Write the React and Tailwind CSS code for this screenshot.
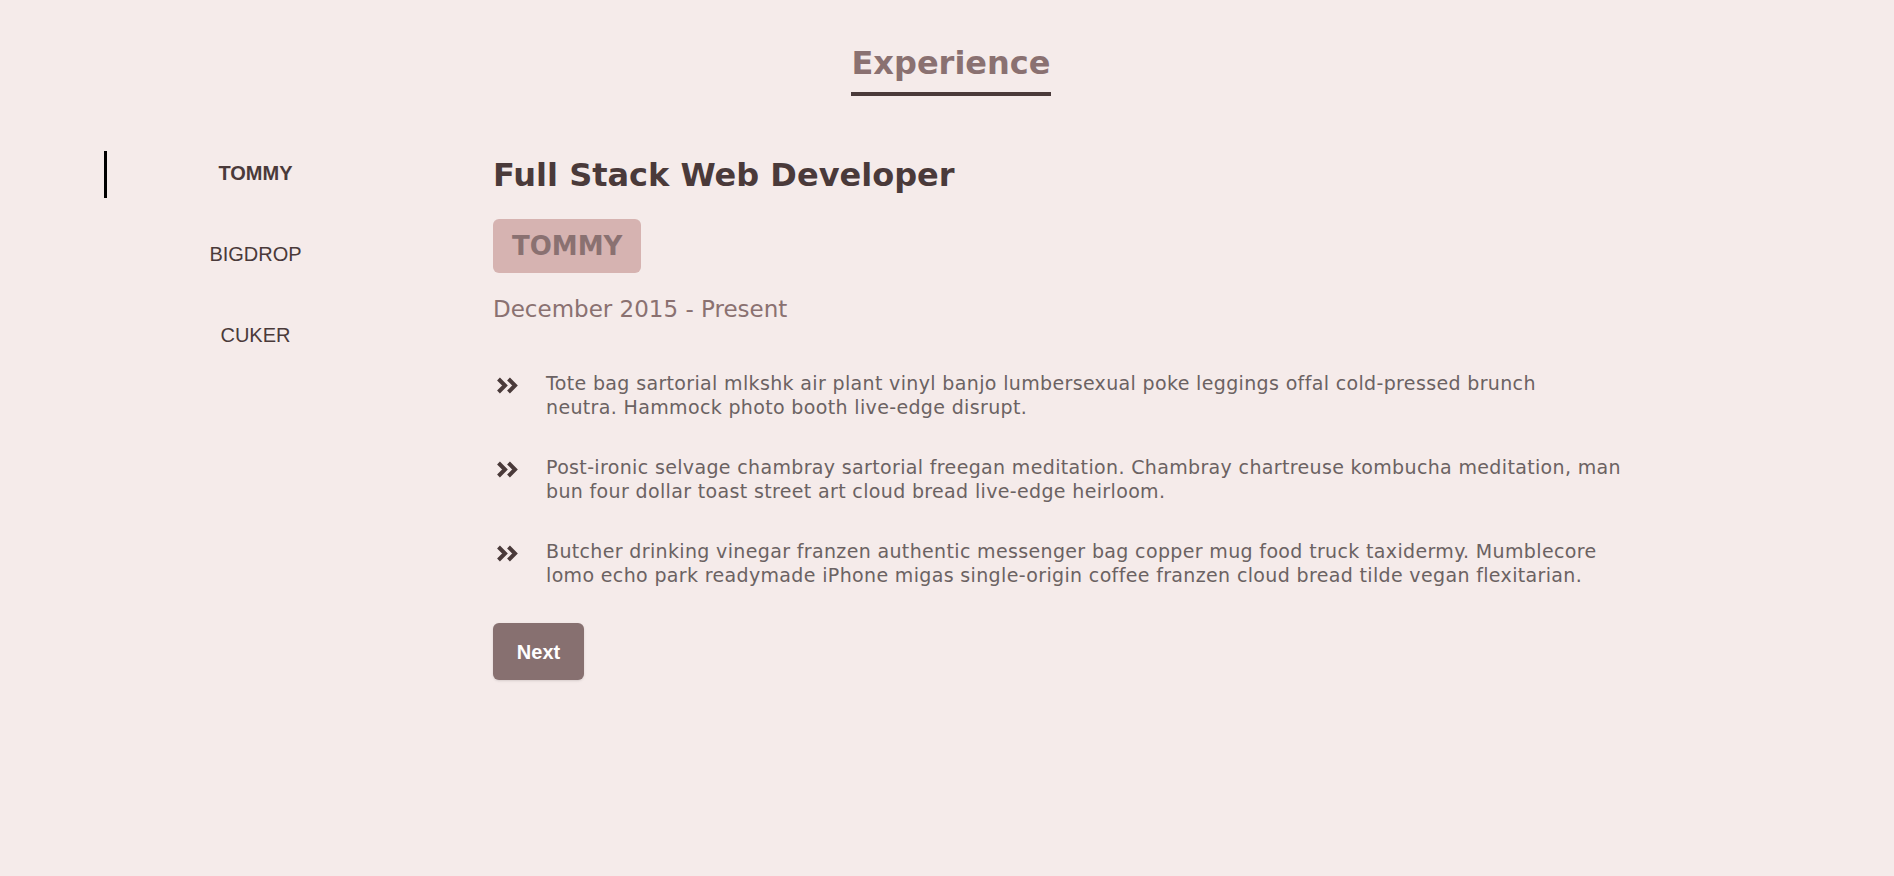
import React from "react";

const jobs = ["TOMMY", "BIGDROP", "CUKER"];
const duties = [
  [
    "Tote bag sartorial mlkshk air plant vinyl banjo lumbersexual poke leggings offal cold-pressed brunch",
    "neutra. Hammock photo booth live-edge disrupt.",
  ],
  [
    "Post-ironic selvage chambray sartorial freegan meditation. Chambray chartreuse kombucha meditation, man bun four dollar toast street art cloud bread live-edge heirloom.",
  ],
  [
    "Butcher drinking vinegar franzen authentic messenger bag copper mug food truck taxidermy. Mumblecore lomo echo park readymade iPhone migas single-origin coffee franzen cloud bread tilde vegan flexitarian.",
  ],
];

function Chevrons() {
  return (
    <svg viewBox="0 0 22 17" className="ml-[3px] mt-[6px] h-[17px] w-[22px] shrink-0" fill="none" stroke="#4a3a3a" strokeWidth="4" strokeLinejoin="miter" strokeLinecap="butt">
      <path d="M2.5 2 L9 8.5 L2.5 15" />
      <path d="M12.5 2 L19 8.5 L12.5 15" />
    </svg>
  );
}

export default function App() {
  return (
    <div className="min-h-screen bg-[#f5ebea] [font-family:'DejaVu_Sans',sans-serif]">
      <div className="flex justify-center pl-[8px] pt-[41px]">
        <h2 className="border-b-4 border-[#4a3a3a] pb-[7px] text-[32px] font-bold leading-[44px] text-[#8a7171]">
          Experience
        </h2>
      </div>
      <div className="mt-[54px] flex pl-[104px]">
        <div className="mt-[1px] flex w-[300px] flex-col [font-family:'Liberation_Sans',Arial,sans-serif]">
          {jobs.map((j, i) => (
            <button
              key={j}
              className={
                i === 0
                  ? "mb-[34px] h-[47px] border-l-[3px] border-black pb-[4px] text-[20px] font-bold text-[#4a3a3a]"
                  : "mb-[34px] h-[47px] border-l-[3px] border-transparent pb-[4px] text-[20px] text-[#4a3a3a]"
              }
            >
              {j}
            </button>
          ))}
        </div>
        <div className="ml-[89px] flex flex-col items-start">
          <h3 className="mt-[1px] text-[32px] font-bold leading-[48px] text-[#4a3a3a]">
            Full Stack Web Developer
          </h3>
          <div className="mt-[20px] rounded-md bg-[#d6b3b1] px-[19px] py-[11px] text-[26px] font-bold leading-[32px] text-[#8a7171]">
            TOMMY
          </div>
          <p className="mt-[21px] text-[23px] leading-[30px] text-[#8a7171]">
            December 2015 - Present
          </p>
          <div className="mt-[47px] flex flex-col gap-[36px]">
            {duties.map((d, i) => (
              <div key={i} className="flex items-start">
                <Chevrons />
                <p className="ml-[28px] max-w-[1085px] text-[19px] leading-[24px] tracking-[0.35px] text-[#6b6262]">
                  {d.length > 1 ? (
                    <>
                      {d[0]}
                      <br />
                      {d[1]}
                    </>
                  ) : (
                    d[0]
                  )}
                </p>
              </div>
            ))}
          </div>
          <button className="mt-[36px] h-[57px] w-[91px] rounded-md bg-[#877070] text-[20px] font-bold text-white shadow-sm [font-family:'Liberation_Sans',Arial,sans-serif]">
            Next
          </button>
        </div>
      </div>
    </div>
  );
}
